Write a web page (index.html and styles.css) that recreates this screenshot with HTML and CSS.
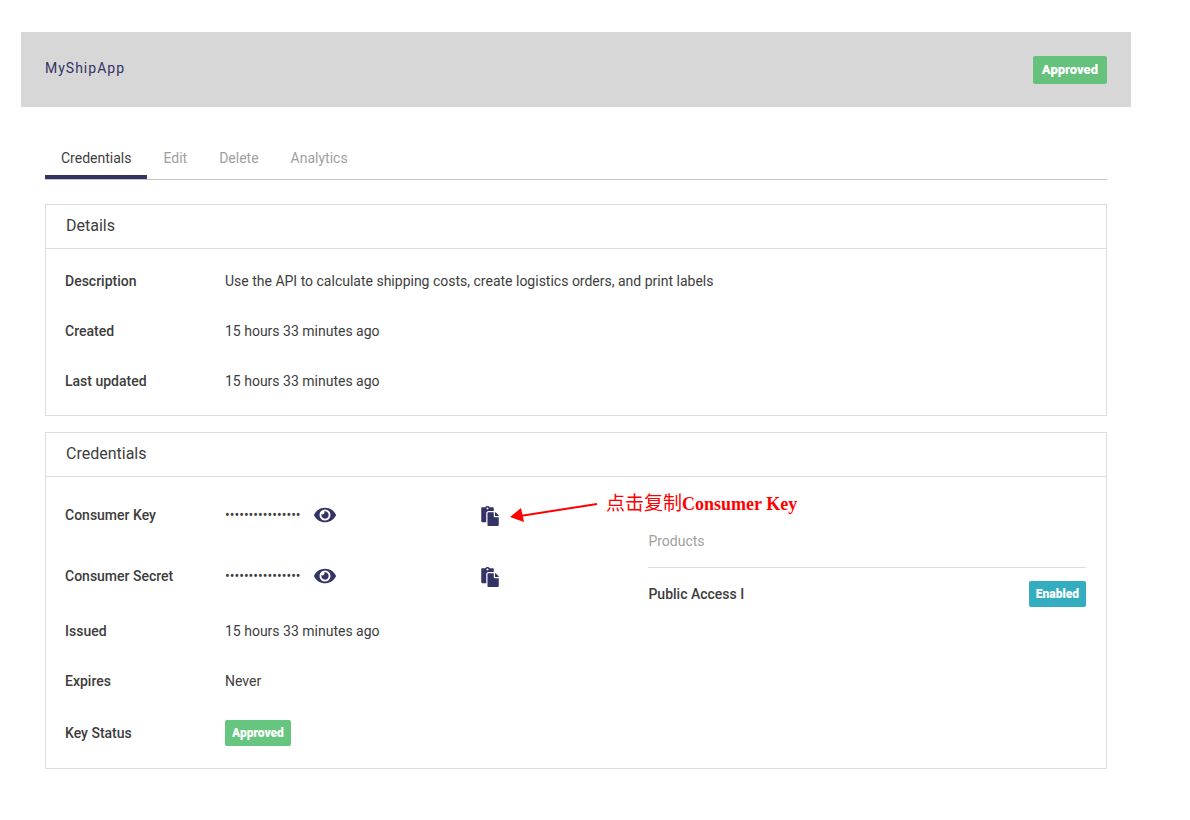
FILE: index.html
```
<!DOCTYPE html>
<html lang="en">
<head>
    <meta charset="UTF-8">
    <meta name="viewport" content="width=device-width, initial-scale=1.0">
    <title>MyShipApp</title>
    <link rel="stylesheet" href="styles.css">
</head>
<body>
<svg class="sprite" aria-hidden="true">
    <symbol id="icon-eye" viewBox="0 0 576 512">
        <path d="M572.52 241.4C518.29 135.59 410.93 64 288 64S57.68 135.64 3.48 241.41a32.35 32.35 0 0 0 0 29.19C57.71 376.41 165.07 448 288 448s230.32-71.64 284.52-177.41a32.35 32.35 0 0 0 0-29.19zM288 400a144 144 0 1 1 144-144 143.93 143.93 0 0 1-144 144zm0-240a95.31 95.31 0 0 0-25.31 3.79 47.85 47.85 0 0 1-66.9 66.9A95.78 95.78 0 1 0 288 160z"/>
    </symbol>
    <symbol id="icon-paste" viewBox="0 0 448 512">
        <path d="M128 184c0-30.879 25.122-56 56-56h136V56c0-13.255-10.745-24-24-24h-80.61C204.306 12.89 183.637 0 160 0s-44.306 12.89-55.39 32H24C10.745 32 0 42.745 0 56v336c0 13.255 10.745 24 24 24h104V184zm32-144c13.255 0 24 10.745 24 24s-10.745 24-24 24-24-10.745-24-24 10.745-24 24-24zm184 248h104v200c0 13.255-10.745 24-24 24H184c-13.255 0-24-10.745-24-24V184c0-13.255 10.745-24 24-24h136v104c0 13.2 10.8 24 24 24zm104-38.059V256h-96v-96h6.059a24 24 0 0 1 16.97 7.029l65.941 65.941a24.002 24.002 0 0 1 7.03 16.971z"/>
    </symbol>
</svg>

<div class="page">
    <header class="app-header">
        <h1>MyShipApp</h1>
        <span class="badge badge-large">Approved</span>
    </header>

    <main>
        <nav class="tabs">
            <a class="active" href="#credentials">Credentials</a>
            <a href="#edit">Edit</a>
            <a href="#delete">Delete</a>
            <a href="#analytics">Analytics</a>
        </nav>

        <section class="card">
            <h2>Details</h2>
            <dl class="card-body">
                <div class="row">
                    <dt>Description</dt>
                    <dd>Use the API to calculate shipping costs, create logistics orders, and print labels</dd>
                </div>
                <div class="row">
                    <dt>Created</dt>
                    <dd>15 hours 33 minutes ago</dd>
                </div>
                <div class="row">
                    <dt>Last updated</dt>
                    <dd>15 hours 33 minutes ago</dd>
                </div>
            </dl>
        </section>

        <section class="card" id="credentials">
            <h2>Credentials</h2>
            <div class="card-body split">
                <dl>
                    <div class="row row-key">
                        <dt>Consumer Key</dt>
                        <dd>
                            <div class="secret">
                                <span>••••••••••••••••</span>
                                <button class="icon-button" type="button" aria-label="Show consumer key"><svg class="eye"><use href="#icon-eye"/></svg></button>
                            </div>
                            <div class="copy">
                                <button class="icon-button" type="button" aria-label="Copy consumer key"><svg class="paste"><use href="#icon-paste"/></svg></button>
                                <div class="callout">
                                    <svg class="arrow" viewBox="0 0 88 24" aria-hidden="true">
                                        <path d="M87 5 L10 17" stroke="#f00" stroke-width="2"/>
                                        <path d="M0 18 L11 9 L14 23 Z" fill="#f00"/>
                                    </svg>
                                    <span lang="zh">点击复制<b>Consumer Key</b></span>
                                </div>
                            </div>
                        </dd>
                    </div>
                    <div class="row row-key">
                        <dt>Consumer Secret</dt>
                        <dd>
                            <div class="secret">
                                <span>••••••••••••••••</span>
                                <button class="icon-button" type="button" aria-label="Show consumer secret"><svg class="eye"><use href="#icon-eye"/></svg></button>
                            </div>
                            <div class="copy">
                                <button class="icon-button" type="button" aria-label="Copy consumer secret"><svg class="paste"><use href="#icon-paste"/></svg></button>
                            </div>
                        </dd>
                    </div>
                    <div class="row">
                        <dt>Issued</dt>
                        <dd>15 hours 33 minutes ago</dd>
                    </div>
                    <div class="row">
                        <dt>Expires</dt>
                        <dd>Never</dd>
                    </div>
                    <div class="row row-status">
                        <dt>Key Status</dt>
                        <dd><span class="badge">Approved</span></dd>
                    </div>
                </dl>

                <div class="products">
                    <h3>Products</h3>
                    <div class="product">
                        <span>Public Access I</span>
                        <span class="badge badge-enabled">Enabled</span>
                    </div>
                </div>
            </div>
        </section>
    </main>
</div>
</body>
</html>
```
FILE: styles.css
```
* {
    box-sizing: border-box;
}

body {
    margin: 0;
    font-family: Roboto, "Liberation Sans", sans-serif;
    font-size: 14px;
    line-height: 20px;
    color: #3d3d3d;
    background-color: #fff;
}

h1, h2, h3, dl, dd {
    margin: 0;
    font-weight: 400;
}

.sprite {
    display: none;
}

.page {
    padding: 32px 59px 32px 21px;
}

/* Header */
.app-header {
    display: flex;
    justify-content: space-between;
    align-items: flex-start;
    padding: 24px 24px 23px;
    background-color: #d7d7d7;
}

h1 {
    font-size: 14px;
    line-height: 24px;
    letter-spacing: 1px;
    color: #333366;
}

main {
    padding: 32px 24px 0;
}

/* Tabs */
.tabs {
    display: flex;
    margin-bottom: 24px;
    border-bottom: 1px solid #c4c4c8;
}

.tabs a {
    padding: 9px 16px 7px;
    border-bottom: 4px solid transparent;
    color: #a0a0a0;
    text-decoration: none;
}

.tabs .active {
    color: #3d3d3d;
    border-bottom-color: #333366;
}

/* Cards */
.card {
    margin-bottom: 16px;
    border: 1px solid #dcdcdc;
}

h2 {
    padding: 9px 20px 10px;
    border-bottom: 1px solid #dcdcdc;
    font-size: 16px;
    line-height: 24px;
}

.card-body {
    padding: 7px 20px 9px 19px;
}

.split {
    display: grid;
    grid-template-columns: 4fr 3fr;
}

.row {
    display: flex;
    align-items: center;
    min-height: 50px;
}

.row-key {
    min-height: 61px;
}

.row-status {
    min-height: 53px;
}

dt {
    flex: 0 0 160px;
    font-weight: 500;
}

dd {
    display: flex;
    align-items: center;
}

.secret {
    display: flex;
    align-items: center;
    gap: 13px;
    width: 256px;
}

.icon-button {
    display: block;
    padding: 0;
    border: none;
    background: none;
    color: #333366;
    cursor: pointer;
}

.icon-button svg {
    display: block;
    fill: currentColor;
}

.eye {
    width: 22px;
    height: 20px;
}

.paste {
    width: 18px;
    height: 20px;
}

.copy {
    position: relative;
    padding-top: 2px;
}

/* Note pointing at the copy button */
.callout {
    position: absolute;
    top: -14px;
    left: 29px;
    display: flex;
    gap: 8px;
    white-space: nowrap;
    font-family: "Noto Sans CJK SC", sans-serif;
    font-size: 19px;
    line-height: 24px;
    color: #f00;
}

.callout b {
    font-family: "Liberation Serif", serif;
    font-size: 18px;
}

.arrow {
    width: 88px;
    height: 24px;
    margin-top: 9px;
}

/* Products */
.products {
    padding-top: 47px;
}

h3 {
    padding-bottom: 16px;
    border-bottom: 1px solid #dcdcdc;
    font-size: 14px;
    color: #a0a0a0;
}

.product {
    display: flex;
    justify-content: space-between;
    align-items: center;
    min-height: 52px;
    font-weight: 500;
}

/* Badges */
.badge {
    padding: 3px 7px;
    border-radius: 2px;
    background-color: #66c57f;
    font-size: 12px;
    font-weight: 900;
    color: #fff;
}

.badge-large {
    padding: 4px 9px;
    background-color: #65c17c;
    font-size: 13px;
}

.badge-enabled {
    background-color: #35adc1;
}
```
